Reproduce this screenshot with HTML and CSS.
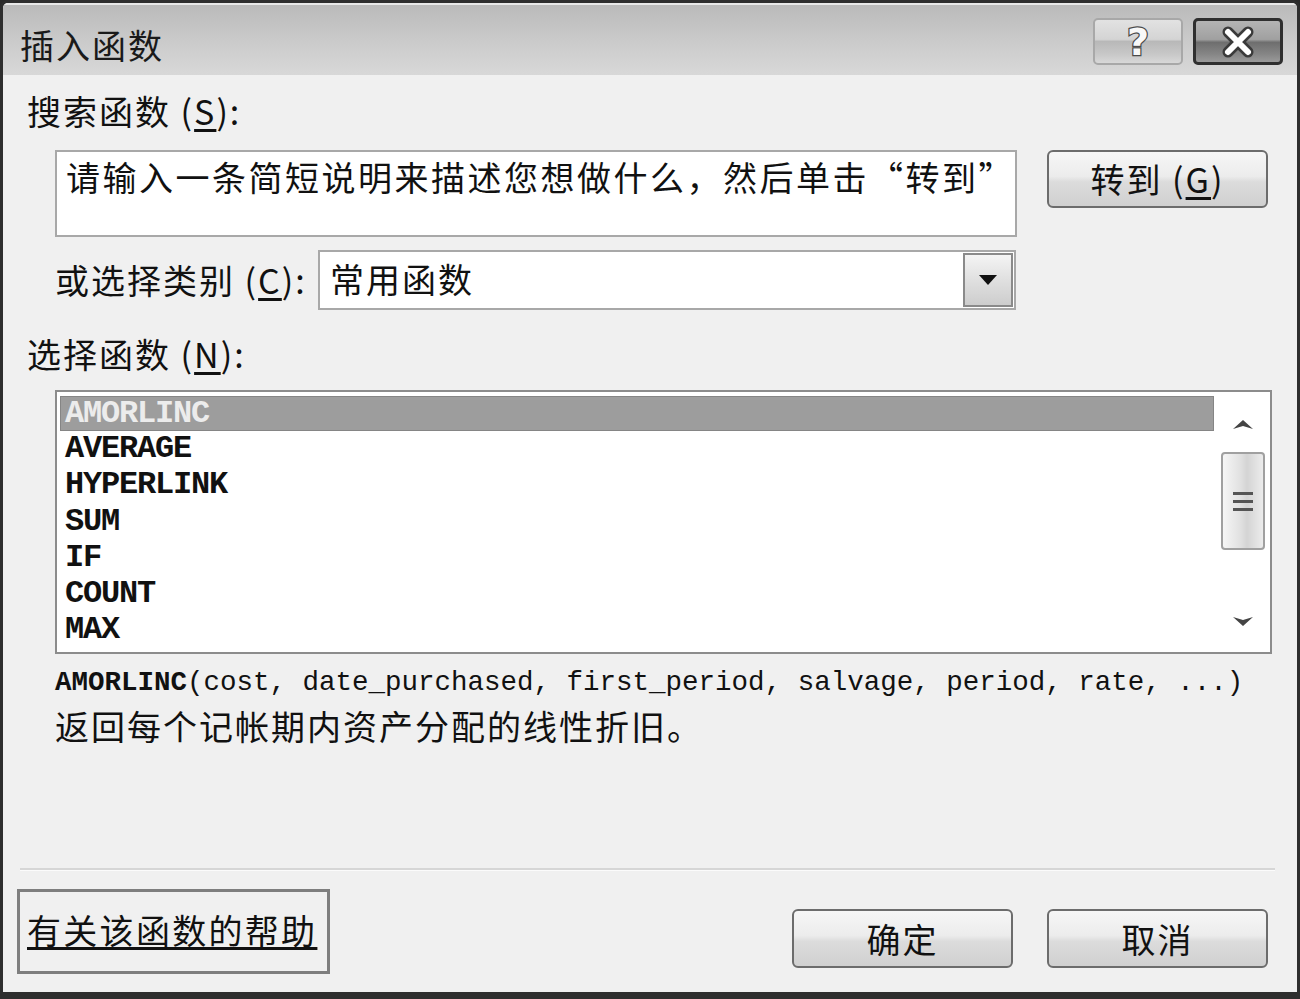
FILE: index.html
```html
<!DOCTYPE html>
<html lang="zh-CN">
  <head>
    <meta charset="UTF-8" />
    <meta name="viewport" content="width=device-width, initial-scale=1.0" />
    <link rel="stylesheet" href="styles.css">
    <title>插入函数</title>
  </head>
  <body>
    <div class="dialog">
      <div class="titlebar">
        <span class="title">插入函数</span>
        <div class="caption-btns">
          <button class="cap-btn help-btn"><span class="q">?</span></button>
          <button class="cap-btn close-btn">
            <svg width="44" height="32" viewBox="0 0 44 32">
              <path d="M12 6 L32 26 M32 6 L12 26" stroke="#3a3a3a" stroke-width="11" stroke-linecap="round" />
              <path d="M12 6 L32 26 M32 6 L12 26" stroke="#fff" stroke-width="6" stroke-linecap="round" />
            </svg>
          </button>
        </div>
      </div>

      <div class="content">
        <p class="label first">搜索函数 (<u>S</u>):</p>
        <div class="search-row">
          <div class="search-box">请输入一条简短说明来描述您想做什么，然后单击“转到”</div>
          <button class="btn go-btn">转到 (<u>G</u>)</button>
        </div>

        <div class="category-row">
          <span class="label cat-label">或选择类别 (<u>C</u>):</span>
          <div class="select">
            <span class="select-text">常用函数</span>
            <span class="drop-btn">
              <svg width="20" height="12" viewBox="0 0 20 12"><polygon points="1,1 19,1 10,11" fill="#111" /></svg>
            </span>
          </div>
        </div>

        <p class="label fn-label">选择函数 (<u>N</u>):</p>
        <div class="listbox">
          <ul class="fn-list">
            <li class="selected">AMORLINC</li>
            <li>AVERAGE</li>
            <li>HYPERLINK</li>
            <li>SUM</li>
            <li>IF</li>
            <li>COUNT</li>
            <li>MAX</li>
          </ul>
          <div class="scrollbar">
            <div class="sb-arrow">
              <svg width="22" height="12" viewBox="0 0 22 12"><polygon points="1,11 11,2 21,11 11,8" fill="#444" /></svg>
            </div>
            <div class="sb-thumb">
              <span class="grip"></span>
              <span class="grip"></span>
              <span class="grip"></span>
            </div>
            <div class="sb-space"></div>
            <div class="sb-arrow">
              <svg width="22" height="12" viewBox="0 0 22 12"><polygon points="1,1 11,10 21,1 11,4" fill="#444" /></svg>
            </div>
          </div>
        </div>

        <p class="syntax"><b>AMORLINC</b>(cost, date_purchased, first_period, salvage, period, rate, ...)</p>
        <p class="desc">返回每个记帐期内资产分配的线性折旧。</p>

        <div class="separator"></div>
        <div class="footer">
          <a class="help-link" href="#">有关该函数的帮助</a>
          <div class="footer-btns">
            <button class="btn">确定</button>
            <button class="btn">取消</button>
          </div>
        </div>
      </div>
    </div>
  </body>
</html>
```

FILE: styles.css
```css
* {
  box-sizing: border-box;
}
body {
  margin: 0;
  background: #2a2a2a;
  font-family: "Noto Sans CJK SC", "Noto Sans", sans-serif;
  color: #111;
}
.dialog {
  width: 1300px;
  height: 999px;
  border: 3px solid #2e2e2e;
  border-bottom-width: 7px;
  border-radius: 8px 8px 0 0;
  background: #f0f0f0;
  display: flex;
  flex-direction: column;
  overflow: hidden;
}
.titlebar {
  height: 72px;
  flex-shrink: 0;
  display: flex;
  justify-content: space-between;
  align-items: flex-start;
  padding: 0 14px 0 17px;
  background: linear-gradient(#bababa, #cdcdcd 60%, #d8d8d8);
  border-top: 2px solid #e8e8e8;
}
.title {
  font-size: 34px;
  line-height: 40px;
  margin-top: 20px;
  letter-spacing: 2px;
  color: #1a1a1a;
}
.caption-btns {
  display: flex;
  gap: 10px;
  margin-top: 13px;
}
.cap-btn {
  width: 90px;
  height: 47px;
  border-radius: 5px;
  padding: 0;
  display: flex;
  align-items: center;
  justify-content: center;
  cursor: pointer;
}
.help-btn {
  border: 2px solid #a8a8a8;
  background: linear-gradient(#e2e2e2, #d4d4d4 45%, #b8b8b8 50%, #c8c8c8 80%, #d8d8d8);
}
.help-btn .q {
  font-family: "DejaVu Sans", sans-serif;
  font-weight: bold;
  font-size: 38px;
  line-height: 40px;
  color: #f8f8f8;
  -webkit-text-stroke: 2.5px #4a4a4a;
  paint-order: stroke fill;
}
.close-btn {
  border: 3px solid #2f2f2f;
  background: linear-gradient(#b4b4b4, #a0a0a0 45%, #6e6e6e 52%, #858585 80%, #9a9a9a);
}

.content {
  flex: 1;
  display: flex;
  flex-direction: column;
  padding: 0 24px;
}
.label {
  margin: 0;
  font-size: 34px;
  line-height: 40px;
  letter-spacing: 2px;
}
.label u,
.btn u {
  text-underline-offset: 4px;
}
.label.first {
  margin-top: 16px;
}
.search-row {
  display: flex;
  align-items: flex-start;
  gap: 30px;
  margin: 19px 0 0 28px;
}
.search-box {
  width: 962px;
  height: 87px;
  background: #fff;
  border: 2px solid #a8a8a8;
  padding: 5px 0 0 9px;
  font-size: 34px;
  line-height: 40px;
  letter-spacing: 2.5px;
  white-space: nowrap;
  overflow: hidden;
}
.btn {
  width: 221px;
  height: 59px;
  border: 2px solid #6c6c6c;
  border-radius: 6px;
  background: linear-gradient(#f6f6f6, #ececec 45%, #dcdcdc 55%, #d0d0d0);
  font-family: "Noto Sans CJK SC", "Noto Sans", sans-serif;
  font-size: 34px;
  line-height: 40px;
  letter-spacing: 2px;
  color: #111;
  cursor: pointer;
  padding: 0;
}
.go-btn {
  height: 58px;
}

.category-row {
  display: flex;
  align-items: center;
  margin: 13px 0 0 28px;
}
.cat-label {
  width: 263px;
}
.select {
  width: 698px;
  height: 60px;
  background: #fff;
  border: 2px solid #a8a8a8;
  display: flex;
  align-items: stretch;
}
.select-text {
  flex: 1;
  padding-left: 10px;
  font-size: 34px;
  line-height: 54px;
  letter-spacing: 2px;
}
.drop-btn {
  width: 50px;
  margin: 1px;
  border: 2px solid #8a8a8a;
  background: linear-gradient(#f4f4f4, #dedede 55%, #cdcdcd);
  display: flex;
  align-items: center;
  justify-content: center;
}

.fn-label {
  margin-top: 24px;
}
.listbox {
  margin: 16px 0 0 28px;
  width: 1217px;
  height: 264px;
  background: #fff;
  border: 2px solid #8c8c8c;
  display: flex;
  padding: 4px 2px 2px 3px;
}
.fn-list {
  flex: 1;
  list-style: none;
  margin: 0;
  padding: 0;
  font-family: "Liberation Mono", monospace;
  font-weight: bold;
  font-size: 32px;
  letter-spacing: -1.2px;
}
.fn-list li {
  height: 36.3px;
  line-height: 36px;
  padding-left: 5px;
}
.fn-list li.selected {
  background: #9d9d9d;
  border: 1px solid #858585;
  color: #ececec;
  height: 35px;
  line-height: 33px;
  padding-left: 4px;
}
.scrollbar {
  width: 50px;
  margin-left: 4px;
  display: flex;
  flex-direction: column;
  align-items: center;
}
.sb-arrow {
  height: 56px;
  width: 100%;
  display: flex;
  align-items: center;
  justify-content: center;
}
.sb-thumb {
  width: 44px;
  height: 98px;
  border: 2px solid #a0a0a0;
  border-radius: 4px;
  background: linear-gradient(90deg, #f6f6f6, #e0e0e0 45%, #d4d4d4 60%, #ececec);
  display: flex;
  flex-direction: column;
  align-items: center;
  justify-content: center;
  gap: 5px;
}
.grip {
  width: 20px;
  height: 3px;
  background: #555;
}
.sb-space {
  flex: 1;
}

.syntax {
  margin: 12px 0 0 28px;
  font-family: "Liberation Mono", monospace;
  font-size: 27.5px;
  line-height: 34px;
  white-space: nowrap;
}
.syntax b {
  font-weight: bold;
}
.desc {
  margin: 6px 0 0 28px;
  font-size: 34px;
  line-height: 40px;
  letter-spacing: 2px;
}

.separator {
  margin: auto -2px 0 -7px;
  height: 3px;
  border-top: 2px solid #d6d6d6;
  border-bottom: 1px solid #fbfbfb;
}
.footer {
  display: flex;
  justify-content: space-between;
  align-items: flex-start;
  height: 121px;
  padding-top: 18px;
}
.help-link {
  margin-left: -10px;
  width: 313px;
  height: 85px;
  border: 3px solid #7e7e7e;
  padding: 18px 0 0 7px;
  font-size: 34px;
  line-height: 40px;
  letter-spacing: 2.3px;
  color: #111;
  text-decoration: underline;
  text-underline-offset: 3px;
  white-space: nowrap;
}
.footer-btns {
  display: flex;
  gap: 34px;
  margin: 20px 5px 0 0;
}
```
